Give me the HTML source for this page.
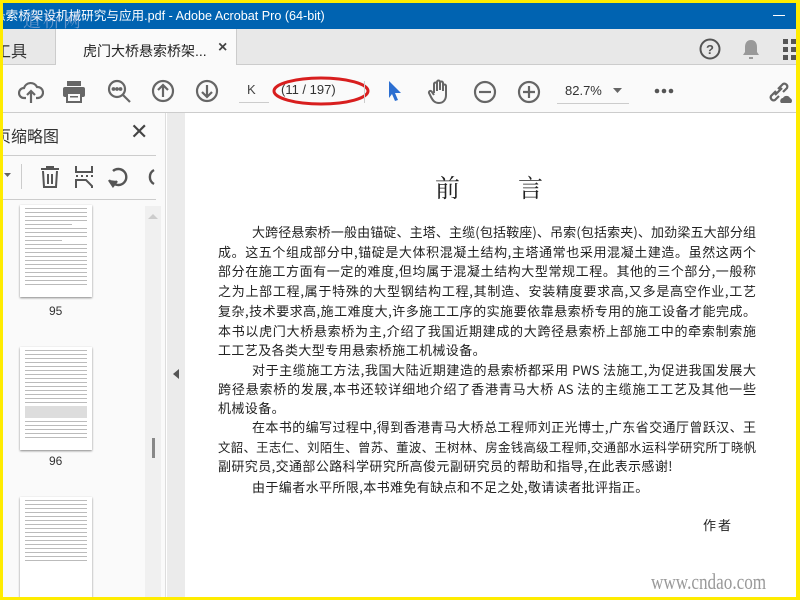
<!DOCTYPE html>
<html><head><meta charset="utf-8"><style>
*{margin:0;padding:0;box-sizing:border-box}
body{width:800px;height:600px;overflow:hidden;background:#ffec00;position:relative;font-family:"Liberation Sans","Noto Sans CJK SC",sans-serif}
.abs{position:absolute}
#win{position:absolute;left:3px;top:3px;width:793px;height:594px;background:#fff;overflow:hidden}
.title{left:-10px;top:0;width:810px;height:26px;background:#0063b1;color:#fff;font-size:12.6px;line-height:26px;white-space:nowrap;padding-left:0}
.tabs{left:0;top:26px;width:793px;height:36px;background:#e8e8e8;border-bottom:1px solid #ccc}
.tb{left:0;top:62px;width:793px;height:48px;background:#fafafa;border-bottom:1px solid #ccc}
.side{left:0;top:110px;width:163px;height:484px;background:#fafafa;border-right:1px solid #ddd}
.gut{left:164px;top:110px;width:18px;height:484px;background:#ebebeb}
.page{left:182px;top:110px;width:611px;height:484px;background:#fff}
.ln{position:absolute;left:215px;width:538px;font-family:"Noto Sans CJK SC","WenQuanYi Zen Hei",sans-serif;font-size:13px;color:#222;text-align:justify;text-align-last:justify;white-space:nowrap;height:20px;line-height:20px}
.ln.l{text-align-last:auto;width:auto;letter-spacing:0.4px}
svg{position:absolute}
.thumb{position:absolute;left:17px;width:72px;background:#fff;box-shadow:0 1px 2px #888}
.thumb i{display:block;height:1px;background:#bbb;margin:3px 5px}
</style></head><body><div id="win">
<div class="abs title">悬索桥架设机械研究与应用.pdf - Adobe Acrobat Pro (64-bit)</div>
<div class="abs" style="left:20px;top:4px;color:rgba(200,200,230,.5);font-size:18px;font-family:'Noto Serif CJK SC',serif;letter-spacing:2px">道桥网</div>
<div class="abs" style="left:770px;top:12px;width:12px;height:1px;background:#fff"></div>
<div class="abs tabs"></div>
<div class="abs" style="left:-8px;top:35px;font-size:16px;color:#333">工具</div>
<div class="abs" style="left:52px;top:26px;width:182px;height:37px;background:#fafafa;border-left:1px solid #ccc;border-right:1px solid #ccc"></div>
<div class="abs" style="left:80px;top:38px;font-size:14px;color:#222">虎门大桥悬索桥架...</div>
<div class="abs" style="left:215px;top:36px;font-size:16px;color:#444;font-weight:bold">×</div>
<svg style="left:696px;top:35px" width="22" height="22"><circle cx="11" cy="11" r="9.5" fill="none" stroke="#555" stroke-width="2"/><text x="11" y="16" font-size="13" font-weight="bold" text-anchor="middle" fill="#555" font-family="Liberation Sans">?</text></svg>
<svg style="left:738px;top:35px" width="20" height="22"><path d="M10 2c-4 0-6 3-6 7v5l-2 3h16l-2-3V9c0-4-2-7-6-7zM8 19h4v2H8z" fill="#999"/></svg>
<svg style="left:780px;top:36px" width="14" height="22"><rect x="0" y="0" width="5" height="5" fill="#555"/><rect x="8" y="0" width="5" height="5" fill="#555"/><rect x="0" y="8" width="5" height="5" fill="#555"/><rect x="8" y="8" width="5" height="5" fill="#555"/><rect x="0" y="16" width="5" height="5" fill="#555"/><rect x="8" y="16" width="5" height="5" fill="#555"/></svg>
<div class="abs tb"></div>
<svg style="left:15px;top:76px" width="26" height="26" fill="none" stroke="#666" stroke-width="2.2"><path d="M8 19H6a5 5 0 0 1 0-10 7 7 0 0 1 13-1 5 5 0 0 1 1 11h-2M13 24V12M9 16l4-4 4 4"/></svg>
<svg style="left:59px;top:77px" width="24" height="24"><rect x="5" y="1" width="14" height="5" fill="#666"/><rect x="1" y="7" width="22" height="10" rx="2" fill="#666"/><rect x="5" y="13" width="14" height="9" fill="#fafafa" stroke="#666" stroke-width="2"/><rect x="8" y="16" width="8" height="1.5" fill="#666"/></svg>
<svg style="left:104px;top:76px" width="26" height="26" fill="none" stroke="#666" stroke-width="2.2"><circle cx="10" cy="10" r="8"/><path d="M16 16l7 7"/><circle cx="6.5" cy="10" r=".8" fill="#666"/><circle cx="10" cy="10" r=".8" fill="#666"/><circle cx="13.5" cy="10" r=".8" fill="#666"/></svg>
<svg style="left:148px;top:76px" width="24" height="24" fill="none" stroke="#666" stroke-width="2.2"><circle cx="12" cy="12" r="10"/><path d="M12 18V6M7 11l5-5 5 5"/></svg>
<svg style="left:192px;top:76px" width="24" height="24" fill="none" stroke="#666" stroke-width="2.2"><circle cx="12" cy="12" r="10"/><path d="M12 6v12M7 13l5 5 5-5"/></svg>
<div class="abs" style="left:244px;top:79px;font-size:13px;color:#444">K</div>
<div class="abs" style="left:236px;top:99px;width:30px;height:1px;background:#ccc"></div>
<div class="abs" style="left:278px;top:79px;font-size:13px;color:#333">(11 / 197)</div>
<svg style="left:268px;top:72px" width="100" height="32"><ellipse cx="50" cy="16" rx="47" ry="13" fill="none" stroke="#d81e1e" stroke-width="3"/></svg>
<div class="abs" style="left:361px;top:78px;width:1px;height:22px;background:#ccc"></div>
<svg style="left:384px;top:77px" width="16" height="24"><path d="M2 1l12 12h-6l3 7-3 1-3-7-3 4z" fill="#2c6fd1"/></svg>
<svg style="left:424px;top:76px" width="26" height="26" fill="none" stroke="#666" stroke-width="2"><path d="M7 14V5a1.5 1.5 0 0 1 3 0v7M10 11V3a1.5 1.5 0 0 1 3 0v8M13 11V4a1.5 1.5 0 0 1 3 0v8M16 12V7a1.5 1.5 0 0 1 3 0v9c0 5-3 8-7 8s-6-2-8-6l-2-4a1.5 1.5 0 0 1 3-1l2 3"/></svg>
<svg style="left:470px;top:77px" width="24" height="24" fill="none" stroke="#666" stroke-width="2.2"><circle cx="12" cy="12" r="10"/><path d="M6 12h12"/></svg>
<svg style="left:514px;top:77px" width="24" height="24" fill="none" stroke="#666" stroke-width="2.2"><circle cx="12" cy="12" r="10"/><path d="M6 12h12M12 6v12"/></svg>
<div class="abs" style="left:562px;top:80px;font-size:13px;color:#333">82.7%</div>
<svg style="left:610px;top:85px" width="10" height="6"><path d="M0 0h9l-4.5 5z" fill="#666"/></svg>
<div class="abs" style="left:554px;top:100px;width:72px;height:1px;background:#ccc"></div>
<svg style="left:651px;top:85px" width="22" height="6"><circle cx="3" cy="3" r="2.3" fill="#555"/><circle cx="10" cy="3" r="2.3" fill="#555"/><circle cx="17" cy="3" r="2.3" fill="#555"/></svg>
<svg style="left:763px;top:76px" width="28" height="26" fill="none" stroke="#666" stroke-width="2.2"><path d="M10 12l-5 5a3 3 0 0 0 4 4l4-4M12 10l5-5a3 3 0 0 1 4 4l-4 4M9 16l7-7"/><path d="M15 24a3 3 0 0 1 2-5 4 4 0 0 1 7 0 3 3 0 0 1 1 5z" fill="#666" stroke="none"/></svg>

<div class="abs side"></div>
<div class="abs" style="left:-8px;top:120px;font-size:16px;color:#333">页缩略图</div>
<div class="abs" style="left:127px;top:116px;font-size:22px;color:#444">✕</div>
<div class="abs" style="left:0;top:152px;width:153px;height:1px;background:#ccc"></div>
<svg style="left:1px;top:170px" width="8" height="5"><path d="M0 0h7l-3.5 4z" fill="#666"/></svg>
<div class="abs" style="left:18px;top:161px;width:1px;height:25px;background:#ccc"></div>
<svg style="left:35px;top:162px" width="24" height="24" fill="none" stroke="#555" stroke-width="2"><path d="M3 4h18M9 4V2h6v2M5 6l1 16h12l1-16M10 9v10M14 9v10"/></svg>
<svg style="left:70px;top:162px" width="22" height="24" fill="none" stroke="#555" stroke-width="2"><path d="M3 1v6h16V1M3 23v-8h10l6 6v2M3 11h2M8 11h2M13 11h2M18 11h2"/></svg>
<svg style="left:104px;top:163px" width="22" height="22" fill="none" stroke="#555" stroke-width="2.4"><path d="M6 17a8 8 0 1 0 0-12"/><path d="M2 14l4 6 4-5" fill="#555"/></svg>
<svg style="left:137px;top:163px" width="16" height="22" fill="none" stroke="#555" stroke-width="2.4"><path d="M14 4a8 8 0 0 0 0 14"/></svg>
<div class="abs" style="left:0;top:196px;width:153px;height:1px;background:#ccc"></div>
<div class="abs" style="left:142px;top:203px;width:16px;height:391px;background:#f0f0f0"></div>
<svg style="left:145px;top:210px" width="10" height="6"><path d="M0 6l5-5 5 5z" fill="#ccc"/></svg>
<div class="abs" style="left:149px;top:435px;width:3px;height:20px;background:#888"></div>
<div class="thumb" style="top:202px;height:92px"><i></i><i></i><i></i><i></i><i style="margin-right:20px"></i><i></i><i></i><i></i><i style="margin-right:30px"></i><i></i><i></i><i></i><i></i><i></i><i></i><i></i><i></i><i></i><i></i><i></i></div>
<div class="abs" style="left:46px;top:301px;font-size:12px;color:#333">95</div>
<div class="thumb" style="top:344px;height:103px"><i></i><i></i><i></i><i></i><i></i><i></i><i></i><i></i><i></i><i></i><i></i><i></i><i></i><i></i><i style="height:12px;background:#ddd"></i><i></i><i></i><i></i><i></i><i></i></div>
<div class="abs" style="left:46px;top:451px;font-size:12px;color:#333">96</div>
<div class="thumb" style="top:494px;height:110px"><i></i><i></i><i></i><i></i><i></i><i></i><i></i><i></i><i></i><i></i><i></i><i></i><i></i><i></i><i></i><i></i></div>

<div class="abs gut"></div>
<svg style="left:170px;top:366px" width="7" height="11"><path d="M6 0v10L0 5z" fill="#555"/></svg>
<div class="abs page"></div>
<div class="abs" style="left:432px;top:166px;font-size:25px;color:#222;font-family:'Noto Serif CJK SC',serif">前</div>
<div class="abs" style="left:515px;top:166px;font-size:25px;color:#222;font-family:'Noto Serif CJK SC',serif">言</div>
<div class="ln" style="top:219px;left:249px;width:504px">大跨径悬索桥一般由锚碇、主塔、主缆(包括鞍座)、吊索(包括索夹)、加劲梁五大部分组</div>
<div class="ln" style="top:239px">成。这五个组成部分中,锚碇是大体积混凝土结构,主塔通常也采用混凝土建造。虽然这两个</div>
<div class="ln" style="top:258px">部分在施工方面有一定的难度,但均属于混凝土结构大型常规工程。其他的三个部分,一般称</div>
<div class="ln" style="top:278px">之为上部工程,属于特殊的大型钢结构工程,其制造、安装精度要求高,又多是高空作业,工艺</div>
<div class="ln" style="top:298px">复杂,技术要求高,施工难度大,许多施工工序的实施要依靠悬索桥专用的施工设备才能完成。</div>
<div class="ln" style="top:318px">本书以虎门大桥悬索桥为主,介绍了我国近期建成的大跨径悬索桥上部施工中的牵索制索施</div>
<div class="ln l" style="top:337px">工工艺及各类大型专用悬索桥施工机械设备。</div>
<div class="ln" style="top:357px;left:249px;width:504px">对于主缆施工方法,我国大陆近期建造的悬索桥都采用 PWS 法施工,为促进我国发展大</div>
<div class="ln" style="top:376px">跨径悬索桥的发展,本书还较详细地介绍了香港青马大桥 AS 法的主缆施工工艺及其他一些</div>
<div class="ln l" style="top:395px">机械设备。</div>
<div class="ln" style="top:414px;left:249px;width:504px">在本书的编写过程中,得到香港青马大桥总工程师刘正光博士,广东省交通厅曾跃汉、王</div>
<div class="ln" style="top:434px;font-size:12.4px">文韶、王志仁、刘陌生、曾苏、董波、王树林、房金钱高级工程师,交通部水运科学研究所丁晓帆</div>
<div class="ln l" style="top:453px">副研究员,交通部公路科学研究所高俊元副研究员的帮助和指导,在此表示感谢!</div>
<div class="ln l" style="top:474px;left:249px">由于编者水平所限,本书难免有缺点和不足之处,敬请读者批评指正。</div>
<div class="ln l" style="top:512px;left:700px;letter-spacing:2px">作者</div>
<div class="abs" style="left:648px;top:566px;font-size:22px;color:#999;font-family:'Liberation Serif',serif;transform:scaleX(.78);transform-origin:left">www.cndao.com</div>
</div></body></html>
